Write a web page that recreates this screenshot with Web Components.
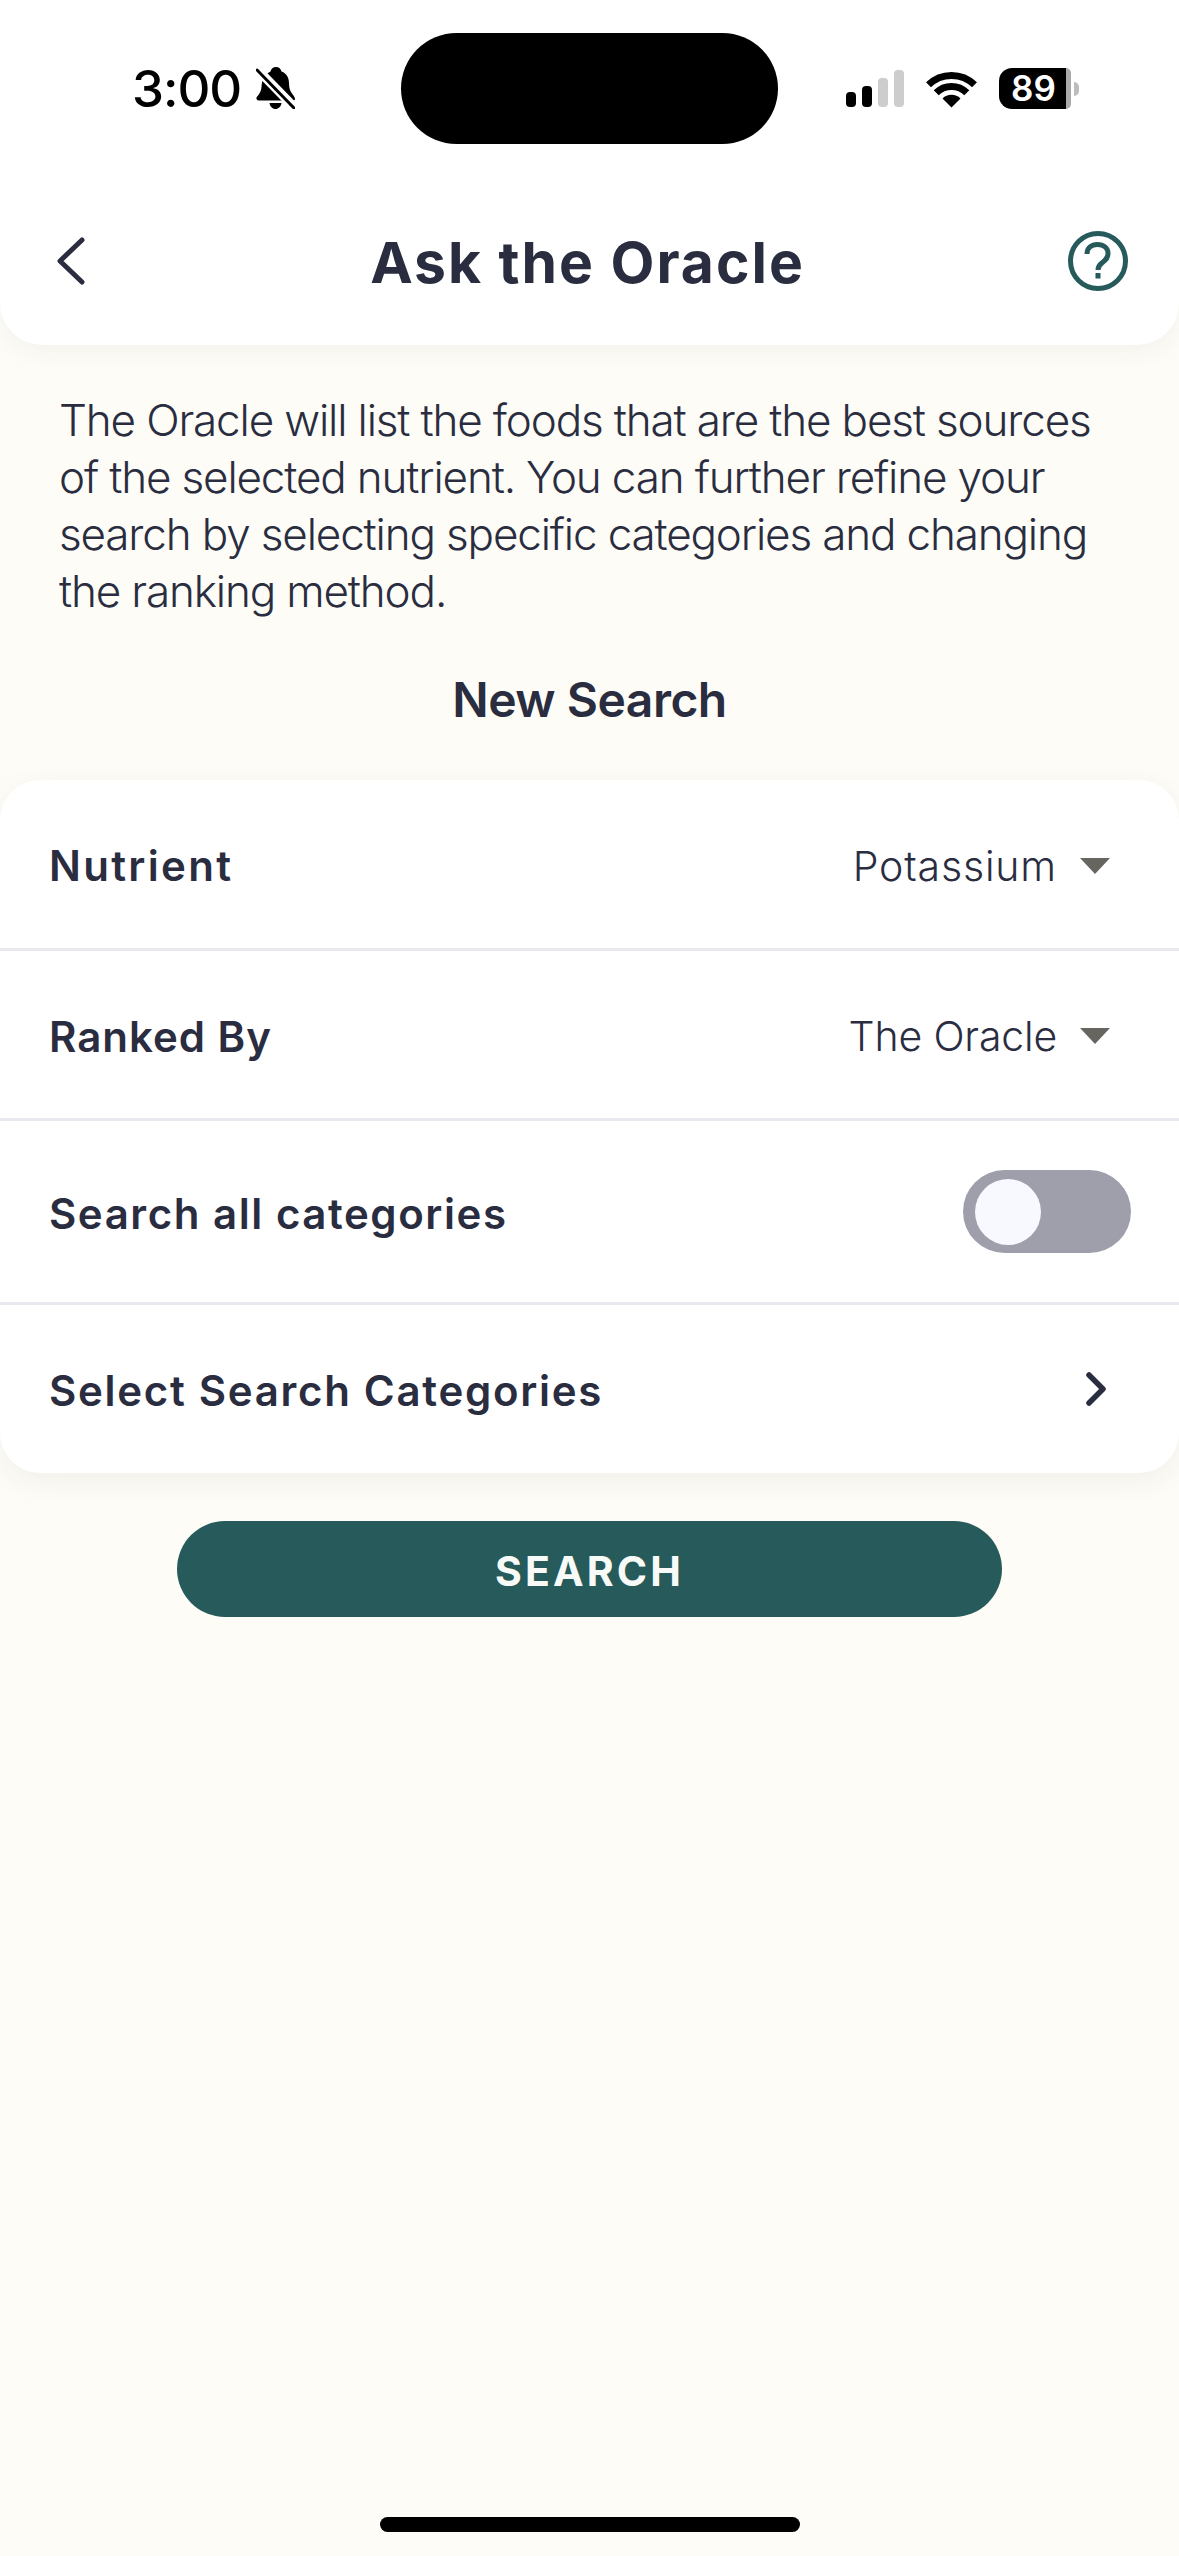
<!DOCTYPE html>
<html lang="en">
<head>
<meta charset="utf-8">
<title>Ask the Oracle</title>
<style>
html,body{margin:0;padding:0;background:#fdfcf7}
body{width:1179px;height:2556px;overflow:hidden;font-family:"Inter","Liberation Sans",sans-serif;color:#2a2d3f}
oracle-screen{height:2556px}
</style>
</head>
<body>
<oracle-screen>
  <ios-status-bar slot="head"></ios-status-bar>
  <app-header slot="head">Ask the Oracle</app-header>
  <intro-text>The Oracle will list the foods that are the best sources of the selected nutrient. You can further refine your search by selecting specific categories and changing the ranking method.</intro-text>
  <section-title>New Search</section-title>
  <settings-card>
    <setting-row label="Nutrient" h="171" style="--ls:2.3px"><picker-value style="letter-spacing:.85px">Potassium</picker-value></setting-row>
    <setting-row label="Ranked By" h="170" style="--ls:1px"><picker-value style="letter-spacing:-.17px">The Oracle</picker-value></setting-row>
    <setting-row label="Search all categories" h="184" style="--ls:1.55px"><toggle-switch></toggle-switch></setting-row>
    <setting-row label="Select Search Categories" h="168" last><row-chevron></row-chevron></setting-row>
  </settings-card>
  <primary-button>SEARCH</primary-button>
  <home-indicator slot="foot"></home-indicator>
</oracle-screen>
<script>
function def(name, html, init){
  customElements.define(name, class extends HTMLElement{
    constructor(){super();this.attachShadow({mode:'open'}).innerHTML=html;}
    connectedCallback(){ if(init) init(this); }
  });
}
def('oracle-screen',`<style>
:host{display:flex;flex-direction:column;background:#fdfcf7}
.top{background:#fff;border-radius:0 0 42px 42px;box-shadow:0 6px 24px rgba(60,55,30,.05)}
.main{flex:1;display:flex;flex-direction:column}
</style><div class="top"><slot name="head"></slot></div><div class="main"><slot></slot></div><slot name="foot"></slot>`);

def('ios-status-bar',`<style>
:host{display:flex;height:111px;padding-top:33px;color:#000;font-family:"Inter","Liberation Sans",sans-serif}
.left{width:401px;box-sizing:border-box;padding-left:132px;display:flex;align-items:center;gap:14px}
.time{font-size:51px;font-weight:500;line-height:1;letter-spacing:-1px;width:110px;white-space:nowrap}
.island{width:377px;height:111px;background:#000;border-radius:56px;flex:none}
.right{flex:1;display:flex;align-items:center;padding-left:68px}
.bat{display:flex;height:41px;margin-left:22px}
.b1{width:67px;background:#000;color:#fff;border-radius:13px 0 0 13px;font-size:35px;font-weight:600;line-height:41px;text-align:center;padding-left:2px;box-sizing:border-box}
.b2{width:5px;background:#ababab;border-radius:0 6px 6px 0}
.nub{width:5px;height:14px;background:#bdbdbd;border-radius:0 7px 7px 0;align-self:center;margin-left:3px}
svg{display:block;flex:none}
</style>
<div class="left"><span class="time">3:00</span>
<svg width="39" height="42" viewBox="0 0 39 42" style="margin-top:-2px"><path fill="#000" d="M20 0c3 0 5 2 5.500 4.500C31 6.500 33 11 33 16c0 5 1 8 3 10.500 2 2.500 3 4.500 3 5.500 0 1-1 1.500-2 1.500H3C1 33.500 0 32 .5 30.500 2 28 5 26 5.500 20 6 14 7 8 14.500 4.500 15 2 17 0 20 0zM13.500 36h12c-.5 3.500-3 6-6 6s-5.500-2.500-6-6z"/><path d="M1 2l37 38" stroke="#fff" stroke-width="9"/><path d="M1 3l37 38" stroke="#000" stroke-width="3" stroke-linecap="round"/></svg></div>
<div class="island"></div>
<div class="right">
<svg width="58" height="38" viewBox="0 0 58 38"><rect x="0" y="22" width="10" height="15" rx="4" fill="#000"/><rect x="16" y="16" width="10" height="21" rx="4" fill="#000"/><rect x="32" y="8" width="10" height="29" rx="4" fill="#cdcdcd"/><rect x="48" y="0" width="10" height="37" rx="4" fill="#cdcdcd"/></svg>
<svg width="51" height="38" viewBox="0 0 51 38" style="margin-left:22px"><path fill="none" stroke="#000" stroke-width="7" d="M2.500 14.800a33 33 0 0 1 46 0"/><path fill="none" stroke="#000" stroke-width="7" d="M10.200 22.800a21.500 21.500 0 0 1 30.600 0"/><path fill="#000" d="M25.500 37.500L16.500 28.500a12.700 12.700 0 0 1 18 0z"/></svg>
<div class="bat"><div class="b1">89</div><div class="b2"></div><div class="nub"></div></div>
</div>`);

def('app-header',`<style>
:host{display:flex;align-items:center;justify-content:space-between;height:60px;padding:87px 50px 54px 57px}
.t{flex:1;text-align:center;font-size:57px;font-weight:700;line-height:60px;letter-spacing:2px;color:#2a2d3f;margin:4px 0 0 22px;font-family:"Inter","Liberation Sans",sans-serif}
svg{display:block;flex:none}
</style>
<svg width="28" height="48" viewBox="0 0 28 48"><path d="M25 3L3 24l22 21" fill="none" stroke="#2a2d3f" stroke-width="5" stroke-linecap="round" stroke-linejoin="round"/></svg>
<div class="t"><slot></slot></div>
<svg width="60" height="60" viewBox="0 0 60 60" style="margin-right:1px"><circle cx="30" cy="30" r="27.500" fill="none" stroke="#265a5b" stroke-width="5"/><path d="M19 23c0-6 4.500-9.500 10.500-9.500S40 17 40 22.500c0 4.500-2.500 6.500-5.500 9-2.800 2.200-4.500 3.500-4.500 7.500" fill="none" stroke="#265a5b" stroke-width="5"/><rect x="27.500" y="42" width="5" height="5.500" fill="#265a5b"/></svg>`);

def('intro-text',`<style>
:host{display:block;padding:46.500px 50px 0 59px;font-size:44px;line-height:57px;font-weight:300;letter-spacing:-1.15px;color:#2a2d3f;font-family:"Inter","Liberation Sans",sans-serif}
</style><slot></slot>`);

def('section-title',`<style>
:host{display:block;text-align:center;margin-top:52.500px;font-size:48px;line-height:56px;font-weight:600;color:#2a2d3f;letter-spacing:-.5px;font-family:"Inter","Liberation Sans",sans-serif}
</style><slot></slot>`);

def('settings-card',`<style>
:host{display:block;margin-top:52px;background:#fff;border-radius:40px;box-shadow:0 8px 28px rgba(60,55,30,.06)}
</style><slot></slot>`);

def('setting-row',`<style>
:host{display:flex;align-items:center;justify-content:space-between;box-sizing:border-box;padding:0 48px 0 49px;border-bottom:3px solid #e8e8ee;font-family:"Inter","Liberation Sans",sans-serif}
:host([last]){border-bottom:0}
.l{font-size:42px;font-weight:600;letter-spacing:var(--ls,1.7px);color:#2a2d3f;margin-top:3px}
</style><span class="l"></span><slot></slot>`,el=>{
  el.shadowRoot.querySelector('.l').textContent=el.getAttribute('label');
  el.style.height=el.getAttribute('h')+'px';
});

def('picker-value',`<style>
:host{display:flex;align-items:center;gap:23px;font-size:41px;font-weight:300;letter-spacing:.15px;color:#2a2d3f;font-family:"Inter","Liberation Sans",sans-serif}
span{margin-top:3px}
i{display:block;width:0;height:0;border-left:15px solid transparent;border-right:15px solid transparent;border-top:16px solid #666560;margin:3px 21px 0 0}
</style><span><slot></slot></span><i></i>`);

def('toggle-switch',`<style>
:host{display:flex;align-items:center;box-sizing:border-box;width:168px;height:83px;padding:0 12px;background:#9e9fab;border-radius:42px}
i{display:block;width:66px;height:66px;border-radius:50%;background:#f8f9fe}
</style><i></i>`);

def('row-chevron',`<style>
:host{display:block;margin-right:25px}svg{display:block}
</style><svg width="20" height="34" viewBox="0 0 20 34"><path d="M3 3l14 14L3 31" fill="none" stroke="#2a2d3f" stroke-width="5.500" stroke-linecap="round" stroke-linejoin="round"/></svg>`);

def('primary-button',`<style>
:host{display:flex;align-items:center;justify-content:center;align-self:center;width:825px;height:96px;box-sizing:border-box;padding-top:3px;margin-top:48px;background:#265a5b;border-radius:48px;color:#f8faf8;font-size:41px;font-weight:700;letter-spacing:3.100px;font-family:"Inter","Liberation Sans",sans-serif}
</style><slot></slot>`);

def('home-indicator',`<style>
:host{display:flex;justify-content:center;padding-bottom:24px}
i{display:block;width:420px;height:15px;background:#000;border-radius:8px}
</style><i></i>`);
</script>
</body>
</html>
